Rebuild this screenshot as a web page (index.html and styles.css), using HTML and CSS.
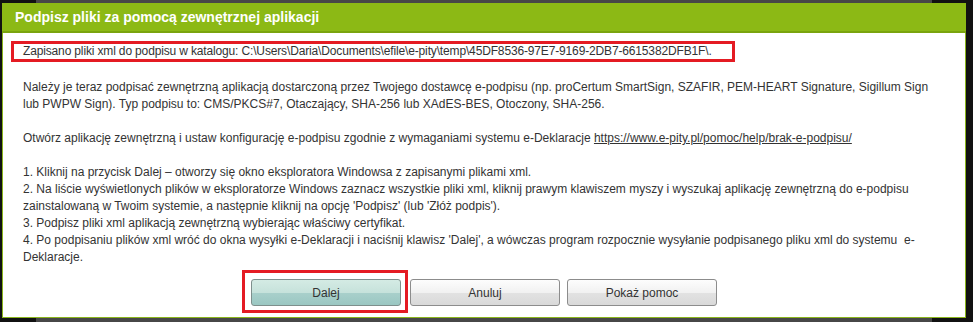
FILE: index.html
```html
<!DOCTYPE html>
<html lang="pl">
<head>
<meta charset="utf-8">
<title>Podpisz pliki za pomocą zewnętrznej aplikacji</title>
<link rel="stylesheet" href="styles.css">
</head>
<body>
<div class="dialog">
  <div class="dialog-header">Podpisz pliki za pomocą zewnętrznej aplikacji</div>
  <div class="dialog-body">
    <div class="path-box">Zapisano pliki xml do podpisu w katalogu: C:\Users\Daria\Documents\efile\e-pity\temp\45DF8536-97E7-9169-2DB7-6615382DFB1F\.</div>
    <div class="text">
      <p>Należy je teraz podpisać zewnętrzną aplikacją dostarczoną przez Twojego dostawcę e-podpisu (np. proCertum SmartSign, SZAFIR, PEM-HEART Signature, Sigillum Sign lub PWPW Sign). Typ podpisu to: CMS/PKCS#7, Otaczający, SHA-256 lub XAdES-BES, Otoczony, SHA-256.</p>
      <p>Otwórz aplikację zewnętrzną i ustaw konfigurację e-podpisu zgodnie z wymaganiami systemu e-Deklaracje <a class="link" href="#">https://www.e-pity.pl/pomoc/help/brak-e-podpisu/</a></p>
      <p>1. Kliknij na przycisk Dalej – otworzy się okno eksploratora Windowsa z zapisanymi plikami xml.<br>
      2. Na liście wyświetlonych plików w eksploratorze Windows zaznacz wszystkie pliki xml, kliknij prawym klawiszem myszy i wyszukaj aplikację zewnętrzną do e-podpisu zainstalowaną w Twoim systemie, a następnie kliknij na opcję 'Podpisz' (lub 'Złóż podpis').<br>
      3. Podpisz pliki xml aplikacją zewnętrzną wybierając właściwy certyfikat.<br>
      4. Po podpisaniu plików xml wróć do okna wysyłki e-Deklaracji i naciśnij klawisz 'Dalej', a wówczas program rozpocznie wysyłanie podpisanego pliku xml do systemu&nbsp; e-Deklaracje.</p>
    </div>
    <div class="buttons">
      <div class="highlight"><button class="btn btn-primary">Dalej</button></div>
      <button class="btn btn-cancel">Anuluj</button>
      <button class="btn btn-help">Pokaż pomoc</button>
    </div>
  </div>
</div>
</body>
</html>
```

FILE: styles.css
```css
html, body {
  margin: 0;
  padding: 0;
}
body {
  width: 973px;
  height: 322px;
  overflow: hidden;
  background: linear-gradient(to right, #111 36px, #474747 36px, #474747 932px, #111 932px);
  font-family: "Liberation Sans", Arial, sans-serif;
  padding-top: 3px;
  box-sizing: border-box;
}
.dialog {
  margin-left: 2px;
  width: 964px;
}
.dialog-header {
  height: 28px;
  line-height: 28px;
  background: #8cb915;
  border-bottom: 2px solid #7aa40e;
  color: #fff;
  font-weight: bold;
  font-size: 14px;
  padding-left: 13px;
}
.dialog-body {
  background: #fff;
  border: 1px solid #8ab41c;
  border-top: 0;
  padding: 8px 0 4px 0;
  color: #333;
  font-size: 12px;
}
.path-box {
  margin-left: 8px;
  width: 724px;
  box-sizing: border-box;
  border: 3px solid #e41b23;
  line-height: 15px;
  padding: 0 9px;
  white-space: nowrap;
  letter-spacing: -0.15px;
}
.text {
  padding: 0 20px;
  margin-top: 17px;
  line-height: 17px;
}
.text p {
  margin: 0 0 17px 0;
}
.text p:last-child {
  margin-bottom: 0;
}
.link {
  color: #333;
  text-decoration: underline;
}
.buttons {
  display: flex;
  align-items: flex-start;
  margin-top: 4px;
  padding-left: 239px;
}
.highlight {
  border: 3px solid #e41b23;
  padding: 6px 4px 4px 6px;
}
.btn {
  width: 150px;
  height: 27px;
  box-sizing: border-box;
  border: 1px solid #8c8c8c;
  border-radius: 3px;
  font-family: "Liberation Sans", Arial, sans-serif;
  font-size: 12px;
  color: #333;
  padding: 0;
  background: linear-gradient(to bottom, #fdfdfd 0%, #f1f1f1 50%, #e2e2e2 51%, #d9d9d9 100%);
}
.btn-primary {
  background: linear-gradient(to bottom, #d4ebe4 0%, #c6e2db 50%, #a9d0cb 51%, #9ac7c2 100%);
  border-color: #7e8f8c;
}
.btn-cancel {
  margin-top: 9px;
  margin-left: 2px;
}
.btn-help {
  margin-top: 9px;
  margin-left: 7px;
}
```
